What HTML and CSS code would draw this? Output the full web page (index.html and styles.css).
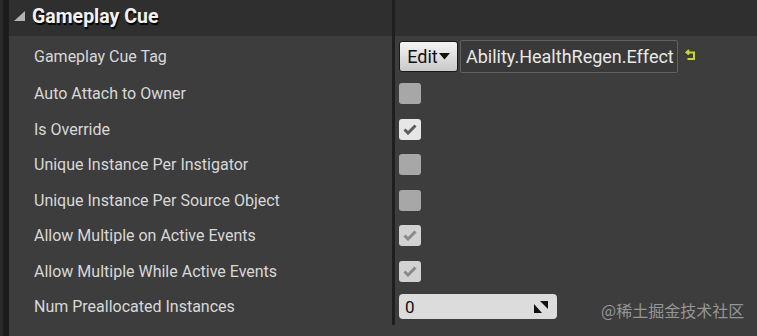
FILE: index.html
```html
<!DOCTYPE html>
<html lang="en">
<head>
  <meta charset="UTF-8">
  <title>Gameplay Cue</title>
  <link rel="stylesheet" href="styles.css">
</head>
<body>
  <div class="panel">
    <div class="row header">
      <div class="name">
        <svg class="arrow" width="11" height="10" viewBox="0 0 11 10"><polygon points="11,0 11,10 0,10" fill="#b4b4b4"/></svg>
        <span class="title">Gameplay Cue</span>
      </div>
      <div class="value"></div>
    </div>

    <div class="row tall">
      <div class="name">Gameplay Cue Tag</div>
      <div class="value">
        <div class="edit-btn">Edit<svg width="11" height="7" viewBox="0 0 11 7"><polygon points="0,0 11,0 5.5,6.5" fill="#111"/></svg></div>
        <div class="tag-box">Ability.HealthRegen.Effect</div>
        <svg class="reset" width="11" height="12" viewBox="0 0 11 12">
          <path d="M4 1 L1.5 3.5 L4 5.5 M1.5 3.5 H9 V10 H2.5" fill="none" stroke="#c9d72c" stroke-width="2"/>
        </svg>
      </div>
    </div>

    <div class="row">
      <div class="name">Auto Attach to Owner</div>
      <div class="value"><span class="check"></span></div>
    </div>
    <div class="row">
      <div class="name">Is Override</div>
      <div class="value"><span class="check on"><svg width="14" height="11" viewBox="0 0 14 11"><path d="M1.5 5.5 L5 9 L12.5 1.5" fill="none" stroke="currentColor" stroke-width="3"/></svg></span></div>
    </div>
    <div class="row">
      <div class="name">Unique Instance Per Instigator</div>
      <div class="value"><span class="check"></span></div>
    </div>
    <div class="row">
      <div class="name">Unique Instance Per Source Object</div>
      <div class="value"><span class="check"></span></div>
    </div>
    <div class="row">
      <div class="name">Allow Multiple on Active Events</div>
      <div class="value"><span class="check on dim"><svg width="14" height="11" viewBox="0 0 14 11"><path d="M1.5 5.5 L5 9 L12.5 1.5" fill="none" stroke="currentColor" stroke-width="3"/></svg></span></div>
    </div>
    <div class="row">
      <div class="name">Allow Multiple While Active Events</div>
      <div class="value"><span class="check on dim"><svg width="14" height="11" viewBox="0 0 14 11"><path d="M1.5 5.5 L5 9 L12.5 1.5" fill="none" stroke="currentColor" stroke-width="3"/></svg></span></div>
    </div>
    <div class="row">
      <div class="name">Num Preallocated Instances</div>
      <div class="value">
        <div class="num-box">
          <span>0</span>
          <svg width="14" height="12" viewBox="0 0 14 12"><polygon points="0,3 0,12 8,12" fill="#111"/><polygon points="6,0 14,0 14,8" fill="#111"/></svg>
        </div>
      </div>
    </div>
  </div>

  <div class="watermark">@稀土掘金技术社区</div>
</body>
</html>
```

FILE: styles.css
```css
body {
  margin: 0;
  background-color: #2b2b2b;
  font-family: Roboto, 'Liberation Sans', sans-serif;
  color: #d8d8d8;
  height: 336px;
  overflow: hidden;
}

.panel {
  margin-left: 3px;
  border-left: 6px solid #1c1c1c;
  background-color: #3d3d3d;
  height: 336px;
}

.row {
  display: grid;
  grid-template-columns: 383px 1fr;
  height: 35.5px;
}

.row.header {
  height: 36px;
  background-color: #2f2f2f;
}

.row.tall {
  height: 40px;
}

.name {
  display: flex;
  align-items: center;
  padding-left: 25px;
  font-size: 16px;
  white-space: nowrap;
}

.header .name {
  padding-left: 5px;
}

.arrow {
  margin-right: 7px;
  margin-top: -4px;
}

.title {
  font-size: 19.5px;
  font-weight: bold;
  color: #f2f2f2;
  text-shadow: 1px 2px 1px #000;
  margin-top: -4px;
}

.value {
  border-left: 3px solid #1f1f1f;
  display: flex;
  align-items: center;
  padding-left: 4px;
}

.edit-btn {
  width: 59px;
  height: 31px;
  box-sizing: border-box;
  border: 1px solid #1a1a1a;
  border-radius: 3px;
  background: linear-gradient(#f4f4f4, #c9c9c9);
  color: #111;
  font-size: 18px;
  display: flex;
  align-items: center;
  justify-content: center;
  gap: 1px;
}

.tag-box {
  margin-left: 2px;
  width: 218px;
  height: 33px;
  box-sizing: border-box;
  border: 1px solid #626262;
  border-radius: 2px;
  background-color: #393939;
  color: #e8e8e8;
  font-size: 18px;
  display: flex;
  align-items: center;
  padding-left: 5px;
  white-space: nowrap;
  overflow: hidden;
}

.reset {
  margin-left: 7px;
  margin-top: -2px;
}

.check {
  width: 22px;
  height: 21px;
  border-radius: 3px;
  background-color: #a7a7a7;
  display: flex;
  align-items: center;
  justify-content: center;
}

.check.on {
  background-color: #e6e6e6;
  color: #5c5c5c;
}

.check.dim {
  background-color: #d2d2d2;
  color: #8a8a8a;
}

.num-box {
  width: 158px;
  height: 25px;
  box-sizing: border-box;
  border-radius: 4px;
  background-color: #dcdcdc;
  color: #111;
  font-size: 17px;
  display: flex;
  align-items: center;
  justify-content: space-between;
  padding: 0 9px 0 6px;
}

.watermark {
  position: absolute;
  left: 601px;
  top: 298px;
  font-family: 'Noto Sans CJK SC', sans-serif;
  font-size: 16px;
  color: #959595;
}
```
